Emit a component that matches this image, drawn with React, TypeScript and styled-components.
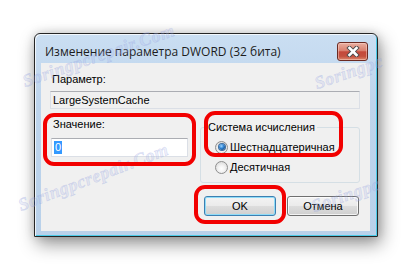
import React from 'react';
import styled, { createGlobalStyle } from 'styled-components';

const GlobalStyle = createGlobalStyle`
  html, body {
    margin: 0;
    padding: 0;
    background: #ffffff;
  }
  body {
    font-family: "Liberation Sans", Arial, sans-serif;
  }
`;

const Page = styled.div`
  position: relative;
  width: 411px;
  height: 271px;
  overflow: hidden;
  box-sizing: border-box;
  padding: 33px 0 0 34px;
  background: #ffffff;
`;

const Window = styled.div`
  width: 344px;
  height: 204px;
  box-sizing: border-box;
  display: flex;
  flex-direction: column;
  border: 1px solid #262626;
  border-radius: 6px 6px 0 0;
  padding: 0 7px 5px 6px;
  background: linear-gradient(to bottom, #cadef2 0%, #bdd4ec 35%, #b9d1ea 100%);
  box-shadow:
    inset 1px 1px 0 rgba(255, 255, 255, 0.75),
    inset -1px -1px 0 #4ccbe8,
    3px 7px 18px rgba(0, 0, 0, 0.42),
    0 0 10px rgba(0, 0, 0, 0.15);
`;

const TitleBar = styled.div`
  height: 29px;
  flex-shrink: 0;
  display: flex;
  align-items: flex-start;
`;

const Title = styled.div`
  flex: 1;
  margin-top: 11px;
  padding-left: 4px;
  font-family: "Open Sans", "Noto Sans", sans-serif;
  font-size: 12px;
  line-height: 14px;
  color: #1c1c1c;
  white-space: nowrap;
`;

const CloseButton = styled.div`
  width: 31px;
  height: 19px;
  margin: 8px 2px 0 0;
  box-sizing: border-box;
  display: flex;
  align-items: center;
  justify-content: center;
  border: 1px solid #6b2a22;
  border-radius: 3px;
  background: linear-gradient(
    to bottom,
    #eab0a2 0%,
    #d9806f 45%,
    #c4483a 52%,
    #c4503e 78%,
    #dc8a6e 100%
  );
  box-shadow: inset 0 0 0 1px rgba(255, 220, 210, 0.45);
`;

const Client = styled.div`
  flex: 1;
  display: flex;
  flex-direction: column;
  box-sizing: border-box;
  padding: 10px 10px 0 9px;
  background: #f0f0f0;
  font-size: 11px;
  color: #000000;
`;

const Label = styled.div`
  line-height: 13px;
  padding-left: 2px;
  white-space: nowrap;
`;

const Field = styled.div<{ $readOnly?: boolean; $height: number; $gap: number }>`
  height: ${(p) => p.$height}px;
  margin-top: ${(p) => p.$gap}px;
  box-sizing: border-box;
  display: flex;
  align-items: center;
  padding-left: 2px;
  border: 1px solid #dbdfe6;
  border-top-color: #abadb3;
  background: ${(p) => (p.$readOnly ? '#f0f0f0' : '#ffffff')};
  line-height: 14px;
`;

const Selected = styled.span`
  padding: 0 1px;
  background: #3399ff;
  color: #ffffff;
  line-height: 13px;
`;

const Row = styled.div`
  display: flex;
  align-items: flex-start;
  margin-top: 9px;
`;

const ValueColumn = styled.div`
  width: 137px;
  margin-left: 1px;
  display: flex;
  flex-direction: column;
`;

const GroupBox = styled.div`
  width: 160px;
  margin: 9px 0 0 12px;
  box-sizing: border-box;
  border: 1px solid #d5dfe5;
  border-radius: 3px;
  padding: 0 0 5px 14px;
`;

const GroupTitle = styled.div`
  width: fit-content;
  margin: -7px 0 3px -9px;
  padding: 0 2px;
  line-height: 13px;
  background: #f0f0f0;
  white-space: nowrap;
`;

const RadioRow = styled.div`
  height: 20px;
  display: flex;
  align-items: center;
  gap: 2px;
`;

const RadioCircle = styled.span<{ $checked?: boolean }>`
  width: 13px;
  height: 13px;
  box-sizing: border-box;
  border-radius: 50%;
  border: 1px solid #8f8f8f;
  background: radial-gradient(circle at 50% 60%, #ffffff 0%, #f4f4f4 35%, #d2d2d2 100%);
  display: flex;
  align-items: center;
  justify-content: center;

  &::after {
    content: '';
    display: ${(p) => (p.$checked ? 'block' : 'none')};
    width: 6px;
    height: 6px;
    border-radius: 50%;
    background: radial-gradient(circle at 40% 35%, #9fd6ff 0%, #2a7fd0 45%, #0d2c52 100%);
    box-shadow: 0 0 0 1px #3d6d9e;
  }
`;

const ButtonRow = styled.div`
  display: flex;
  justify-content: flex-end;
  gap: 11px;
  margin-top: 13px;
  padding-right: 1px;
`;

const Button = styled.div<{ $default?: boolean }>`
  width: 72px;
  height: 20px;
  box-sizing: border-box;
  display: flex;
  align-items: center;
  justify-content: center;
  border-radius: 3px;
  border: 1px solid ${(p) => (p.$default ? '#3c7fb1' : '#707070')};
  background: linear-gradient(
    to bottom,
    #f3f3f3 0%,
    #ebebeb 48%,
    #dddddd 52%,
    #cfcfcf 100%
  );
  box-shadow: inset 0 0 0 1px ${(p) => (p.$default ? '#8fdcf8' : 'rgba(255, 255, 255, 0.75)')};
  line-height: 13px;
`;

const Highlight = styled.div<{ $x: number; $y: number; $w: number; $h: number }>`
  position: absolute;
  left: ${(p) => p.$x}px;
  top: ${(p) => p.$y}px;
  width: ${(p) => p.$w}px;
  height: ${(p) => p.$h}px;
  box-sizing: border-box;
  border: 4px solid #f20000;
  border-radius: 11px;
  pointer-events: none;
`;

const Watermark = styled.div<{ $x: number; $y: number; $angle: number }>`
  position: absolute;
  left: ${(p) => p.$x}px;
  top: ${(p) => p.$y}px;
  transform-origin: 0 100%;
  transform: rotate(${(p) => p.$angle}deg);
  font-family: "Liberation Serif", serif;
  font-style: italic;
  font-weight: bold;
  font-size: 18px;
  line-height: 18px;
  letter-spacing: 0.5px;
  color: rgba(175, 185, 235, 0.22);
  -webkit-text-stroke: 0.6px rgba(140, 155, 220, 0.3);
  white-space: nowrap;
  pointer-events: none;
`;

const CloseIcon = () => (
  <svg width="14" height="11" viewBox="0 0 14 11">
    <path d="M3.5 2 L10.5 9 M10.5 2 L3.5 9" stroke="#4b4b4b" strokeWidth="4.4" strokeLinecap="square" />
    <path d="M3.5 2 L10.5 9 M10.5 2 L3.5 9" stroke="#ffffff" strokeWidth="2.6" strokeLinecap="square" />
  </svg>
);

const App: React.FC = () => {
  return (
    <>
      <GlobalStyle />
      <Page>
        <Window>
          <TitleBar>
            <Title>Изменение параметра DWORD (32 бита)</Title>
            <CloseButton>
              <CloseIcon />
            </CloseButton>
          </TitleBar>
          <Client>
            <Label>Параметр:</Label>
            <Field $readOnly $height={18} $gap={5}>LargeSystemCache</Field>
            <Row>
              <ValueColumn>
                <Label>Значение:</Label>
                <Field $height={19} $gap={7}>
                  <Selected>0</Selected>
                </Field>
              </ValueColumn>
              <GroupBox>
                <GroupTitle>Система исчисления</GroupTitle>
                <RadioRow>
                  <RadioCircle $checked />
                  <span>Шестнадцатеричная</span>
                </RadioRow>
                <RadioRow>
                  <RadioCircle />
                  <span>Десятичная</span>
                </RadioRow>
              </GroupBox>
            </Row>
            <ButtonRow>
              <Button $default>OK</Button>
              <Button>Отмена</Button>
            </ButtonRow>
          </Client>
        </Window>

        <Watermark $x={26} $y={72} $angle={-19}>Soringpcrepair.Com</Watermark>
        <Watermark $x={318} $y={74} $angle={-19}>Soringpc</Watermark>
        <Watermark $x={22} $y={196} $angle={-21}>Soringpcrepair.Com</Watermark>
        <Watermark $x={315} $y={197} $angle={-19}>Soringpc</Watermark>

        <Highlight $x={43} $y={113} $w={153} $h={53} />
        <Highlight $x={204} $y={111} $w={139} $h={46} />
        <Highlight $x={194} $y={185} $w={92} $h={39} />
      </Page>
    </>
  );
};

export default App;
